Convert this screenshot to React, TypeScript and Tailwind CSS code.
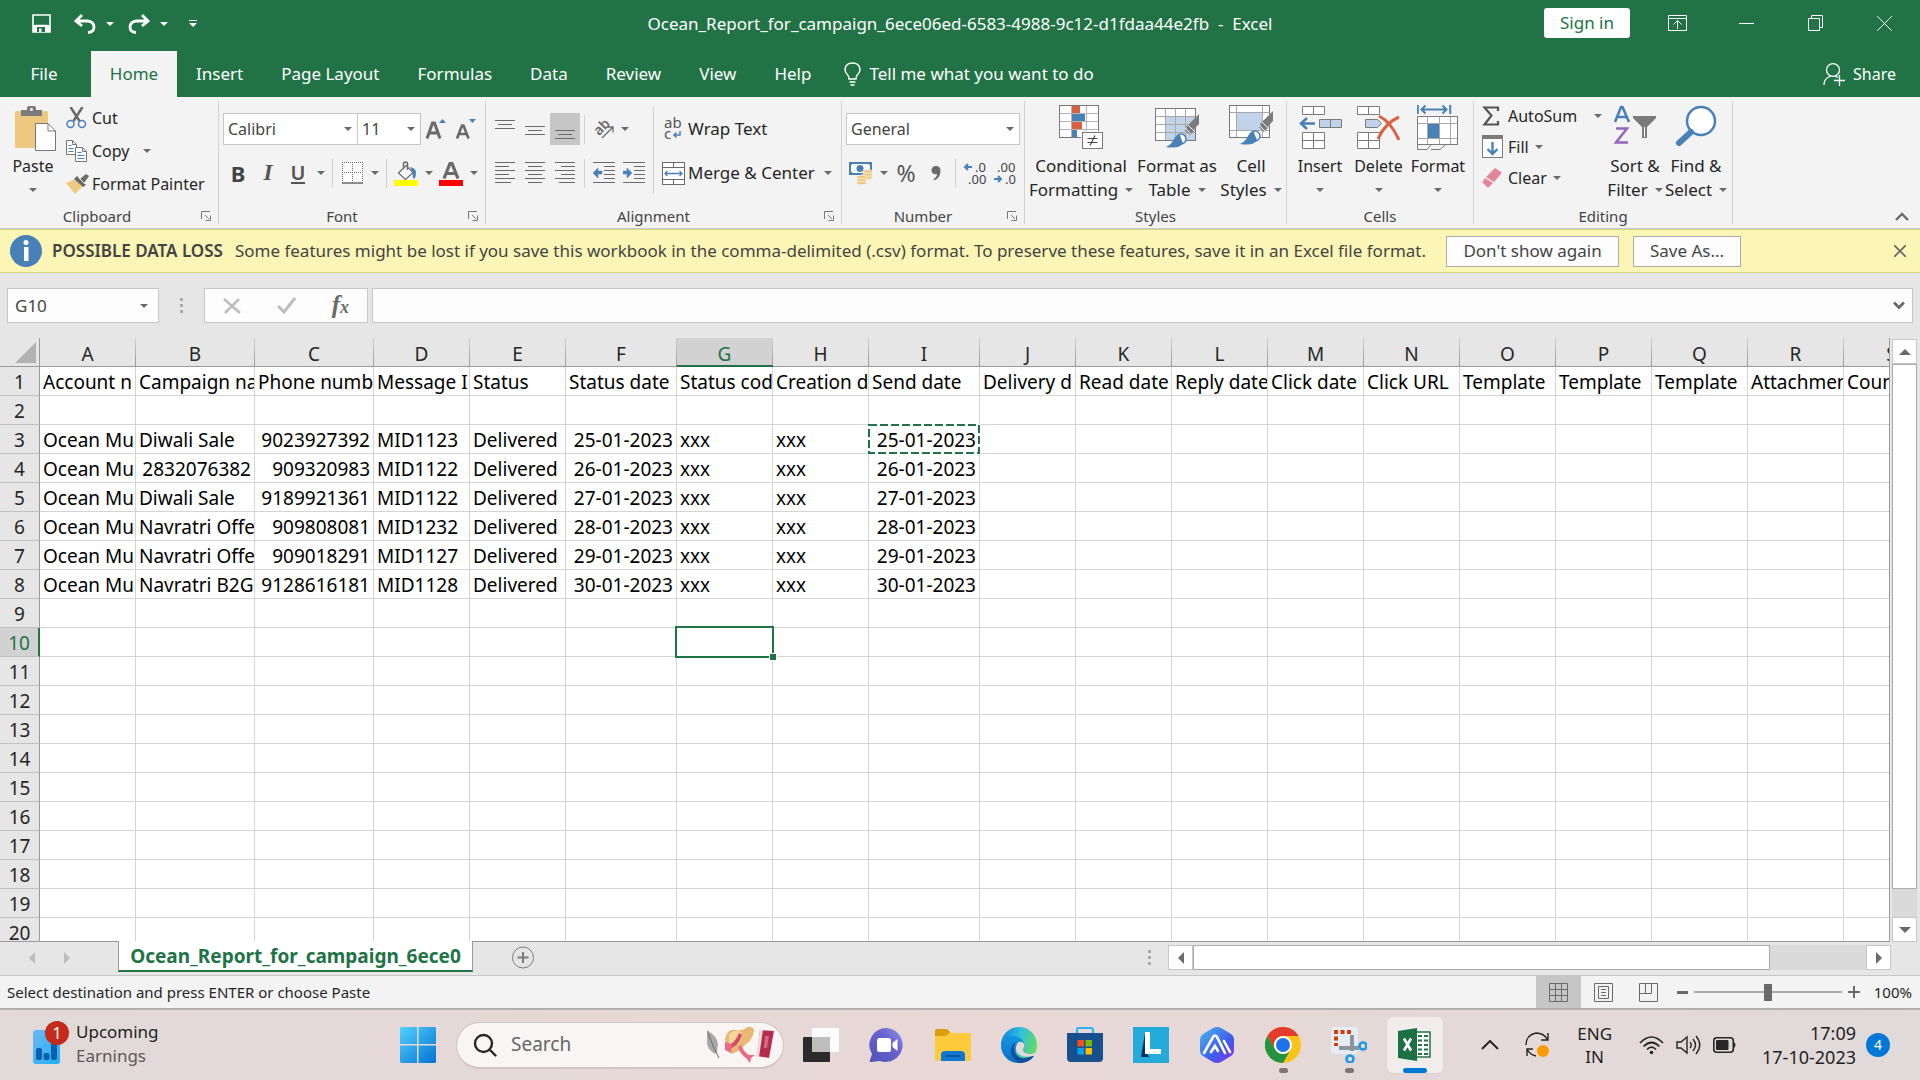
import type { ReactNode } from 'react';
import { useState } from 'react';

type Cell = string | undefined;

interface Column {
  letter: string;
  width: number;
}

const columns: Column[] = [
  { letter: 'A', width: 96 },
  { letter: 'B', width: 119 },
  { letter: 'C', width: 119 },
  { letter: 'D', width: 96 },
  { letter: 'E', width: 96 },
  { letter: 'F', width: 111 },
  { letter: 'G', width: 96 },
  { letter: 'H', width: 96 },
  { letter: 'I', width: 111 },
  { letter: 'J', width: 96 },
  { letter: 'K', width: 96 },
  { letter: 'L', width: 96 },
  { letter: 'M', width: 96 },
  { letter: 'N', width: 96 },
  { letter: 'O', width: 96 },
  { letter: 'P', width: 96 },
  { letter: 'Q', width: 96 },
  { letter: 'R', width: 96 },
  { letter: 'S', width: 96 },
];

const rows: Record<number, Cell[]> = {
  1: [
    'Account n', 'Campaign na', 'Phone numb', 'Message I', 'Status', 'Status date', 'Status cod',
    'Creation d', 'Send date', 'Delivery d', 'Read date', 'Reply date', 'Click date', 'Click URL',
    'Template', 'Template', 'Template', 'Attachmen', 'Coun',
  ],
  3: ['Ocean Mu', 'Diwali Sale', '9023927392', 'MID1123', 'Delivered', '25-01-2023', 'xxx', 'xxx', '25-01-2023'],
  4: ['Ocean Mu', '2832076382', '909320983', 'MID1122', 'Delivered', '26-01-2023', 'xxx', 'xxx', '26-01-2023'],
  5: ['Ocean Mu', 'Diwali Sale', '9189921361', 'MID1122', 'Delivered', '27-01-2023', 'xxx', 'xxx', '27-01-2023'],
  6: ['Ocean Mu', 'Navratri Offe', '909808081', 'MID1232', 'Delivered', '28-01-2023', 'xxx', 'xxx', '28-01-2023'],
  7: ['Ocean Mu', 'Navratri Offe', '909018291', 'MID1127', 'Delivered', '29-01-2023', 'xxx', 'xxx', '29-01-2023'],
  8: ['Ocean Mu', 'Navratri B2G', '9128616181', 'MID1128', 'Delivered', '30-01-2023', 'xxx', 'xxx', '30-01-2023'],
};

const tabs = ['Insert', 'Page Layout', 'Formulas', 'Data', 'Review', 'View', 'Help'];

const isNumeric = (value: Cell) => !!value && /^[\d-]+$/.test(value);

/* ---------- small shared pieces ---------- */

function Caret({ className = 'fill-[#6a6a6a]' }: { className?: string }) {
  return (
    <svg width="8" height="4" viewBox="0 0 8 4" className={`shrink-0 ${className}`} aria-hidden="true">
      <path d="M0 0h8L4 4z" />
    </svg>
  );
}

function CaretButton({ label, className = 'w-[15px]' }: { label: string; className?: string }) {
  return (
    <button type="button" aria-label={label} className={`flex h-8 items-center justify-center ${className}`}>
      <Caret />
    </button>
  );
}

function ToolButton({ label, selected, children }: { label: string; selected?: boolean; children: ReactNode }) {
  return (
    <button
      type="button"
      aria-label={label}
      className={`flex h-8 w-[30px] items-center justify-center ${selected ? 'bg-[#c6c6c6]' : ''}`}
    >
      {children}
    </button>
  );
}

function Divider() {
  return <span className="mx-1 h-[29px] w-px bg-[#d2d2d2]" />;
}

function Launcher({ label }: { label: string }) {
  return (
    <button type="button" aria-label={label} className="flex w-6 justify-end pr-[7px]">
      <svg width="10" height="10" viewBox="0 0 10 10" fill="none" stroke="#777" aria-hidden="true">
        <path d="M.5 8V.5H9M4 4l4 4M9.5 4.500v5h-5" />
      </svg>
    </button>
  );
}

function Group({ label, launcher, className, children }: {
  label: string;
  launcher?: boolean;
  className: string;
  children: ReactNode;
}) {
  return (
    <section aria-label={label} className={`my-1 flex shrink-0 flex-col border-r border-[#d2d2d2] ${className}`}>
      <div className="flex flex-1">{children}</div>
      <div className="flex h-4 items-center">
        <span className="flex-1 text-center text-[15px] leading-4 text-[#444]">{label}</span>
        {launcher && <Launcher label={`${label} settings`} />}
      </div>
    </section>
  );
}

function BigButton({ lines, className, children }: {
  lines: string[];
  className: string;
  children: ReactNode;
}) {
  const single = lines.length === 1;
  return (
    <button
      type="button"
      className={`flex flex-col items-center pt-1 leading-6 whitespace-nowrap ${single ? 'text-base' : 'text-[17px]'} ${className}`}
    >
      <span className="flex h-[49px] items-start justify-center">{children}</span>
      {lines.map((line, i) => (
        <span key={line} className="flex h-6 items-center gap-[7px] leading-6">
          {line}
          {i === 1 && <Caret />}
        </span>
      ))}
      {single && <span className="flex h-6 items-center"><Caret /></span>}
    </button>
  );
}

/* ---------- ribbon icons ---------- */

function PasteIcon() {
  return (
    <svg width="42" height="46" viewBox="0 0 42 46" aria-hidden="true">
      <rect x="0" y="5" width="33" height="37" rx="1.5" fill="#edc87e" />
      <path d="M6 4h6V2q0-2 2-2h5q2 0 2 2v2h6v6H6z" fill="#7b7b7b" />
      <circle cx="16.5" cy="3.5" r="1.5" fill="#fff" />
      <path d="M20 17h14l8 8v21H20z" fill="#f3f3f3" />
      <path d="M20.500 17.500H33l7.500 7.500v19.500h-20z" fill="#fff" stroke="#777" />
      <path d="M33 17.500V25h7.500" fill="none" stroke="#777" />
    </svg>
  );
}

function CutIcon() {
  return (
    <svg width="21" height="22" viewBox="0 0 21 22" fill="none" aria-hidden="true">
      <path d="M4.500 0l9 14M16.500 0l-9 14" stroke="#6a6a6a" strokeWidth="2.5" />
      <circle cx="4.5" cy="17" r="3.5" stroke="#4880b8" strokeWidth="1.5" />
      <circle cx="16" cy="17" r="3.5" stroke="#4880b8" strokeWidth="1.5" />
    </svg>
  );
}

function CopyIcon() {
  return (
    <svg width="21" height="22" viewBox="0 0 21 22" fill="#fff" stroke="#777" aria-hidden="true">
      <path d="M.5.500h6l4 4v10H.500z" />
      <path d="M6.500.500v4h4" fill="none" />
      <path d="M2.500 5.500h3M2.500 8.500h5M2.500 11.500h5" stroke="#4880b8" />
      <path d="M9.500 7.500h7l4 4v10h-11z" />
      <path d="M16.500 7.500v4h4" fill="none" />
      <path d="M11.500 12.500h4M11.500 15.500h7M11.500 18.500h7" stroke="#4880b8" />
    </svg>
  );
}

function PainterIcon() {
  return (
    <svg width="23" height="20" viewBox="0 0 23 20" aria-hidden="true">
      <path d="M0 9l9-4 7 8-7 7z" fill="#edc87e" />
      <path d="M8 5l3-3 9 9-3 2z" fill="#6a6a6a" />
      <path d="M14 5l6-5 3 2-5 7z" fill="#6a6a6a" />
      <path d="M13 4l6 6" stroke="#f3f3f3" />
    </svg>
  );
}

function BordersIcon() {
  return (
    <svg width="21" height="22" viewBox="0 0 21 22" stroke="#6a6a6a" aria-hidden="true">
      <rect width="21" height="21" fill="#fff" stroke="none" />
      <path d="M0 .5h21M.5 0v21M20.500 0v21M10.500 0v21M0 10.500h21" strokeDasharray="1 1" />
      <path d="M0 21h21" strokeWidth="1.5" />
    </svg>
  );
}

function FillColorIcon() {
  return (
    <svg width="24" height="25" viewBox="0 0 24 25" aria-hidden="true">
      <path d="M4.500 12L12 4.500l7 7-7.500 7z" fill="#fff" stroke="#6a6a6a" strokeWidth="1.2" />
      <path d="M9.500 8V3q0-2 2-2t2 2v6" fill="none" stroke="#6a6a6a" strokeWidth="1.5" />
      <path d="M16 6q6 1 6 6 0 4-2 6-2-2-1-6z" fill="#4880b8" />
      <rect y="19" width="24" height="6" fill="#ff0" />
    </svg>
  );
}

function FontColorIcon() {
  return (
    <svg width="24" height="25" viewBox="0 0 24 25" aria-hidden="true">
      <path d="M5 17.500L11 2.500h2L19 17.500M7.500 12.500h9" fill="none" stroke="#6a6a6a" strokeWidth="3.2" />
      <rect y="19" width="24" height="6" fill="#f00" />
    </svg>
  );
}

function SizeIcon({ grow }: { grow?: boolean }) {
  return (
    <svg width="22" height="24" viewBox="0 0 22 24" fill="none" aria-hidden="true">
      {grow ? (
        <>
          <path d="M2 21.500L7.500 6h2L15 21.500M4.500 16h8" stroke="#6a6a6a" strokeWidth="3" />
          <path d="M14 6h7l-3.500-4z" fill="#4880b8" />
        </>
      ) : (
        <>
          <path d="M2 21.500L7 8.500h1.500l5 13M4 17h7.500" stroke="#6a6a6a" strokeWidth="2.6" />
          <path d="M14 2h7l-3.500 4z" fill="#4880b8" />
        </>
      )}
    </svg>
  );
}

function LinesIcon({ d }: { d: string }) {
  return (
    <svg width="22" height="22" viewBox="0 0 22 22" stroke="#6a6a6a" fill="none" aria-hidden="true">
      <path d={d} />
    </svg>
  );
}

function IndentIcon({ increase }: { increase?: boolean }) {
  return (
    <svg width="22" height="22" viewBox="0 0 22 22" stroke="#6a6a6a" fill="none" aria-hidden="true">
      <path d="M0 .5h22M11 4.500h11M11 8.500h11M11 12.500h11M11 16.500h11M0 20.500h22" />
      {increase ? (
        <path d="M0 9h4V6l5 5-5 5v-4H0z" fill="#4880b8" stroke="#4880b8" strokeWidth=".5" />
      ) : (
        <path d="M9 9H5V6l-5 5 5 5v-4h4z" fill="#4880b8" stroke="#4880b8" strokeWidth=".5" />
      )}
    </svg>
  );
}

function OrientationIcon() {
  return (
    <svg width="22" height="22" viewBox="0 0 22 22" aria-hidden="true">
      <text x="2" y="15" transform="rotate(-45 8 12)" fontSize="14" fontWeight="600" fill="#6a6a6a">ab</text>
      <path d="M9 20L20 9M14.500 9H20v5.500" fill="none" stroke="#6a6a6a" strokeWidth="1.3" />
    </svg>
  );
}

function WrapIcon() {
  return (
    <svg width="18" height="24" viewBox="0 0 18 24" aria-hidden="true">
      <text x="0" y="11" fontSize="15" fill="#555">ab</text>
      <text x="0" y="22" fontSize="15" fill="#555">c</text>
      <path d="M16 14v4h-6M12.500 15.500L10 18l2.500 2.500" fill="none" stroke="#4880b8" strokeWidth="1.5" />
    </svg>
  );
}

function MergeIcon() {
  return (
    <svg width="23" height="23" viewBox="0 0 23 23" fill="#fff" stroke="#6a6a6a" aria-hidden="true">
      <rect x=".5" y=".5" width="22" height="22" />
      <path d="M0 5.500h23M0 17.500h23M11.500 0v5.500M11.500 17.500V23" />
      <path d="M3 11.500h17M5.500 9L3 11.500 5.500 14M17.500 9l2.500 2.500-2.500 2.500" fill="none" stroke="#4880b8" strokeWidth="1.3" />
    </svg>
  );
}

function MoneyIcon() {
  return (
    <svg width="24" height="24" viewBox="0 0 24 24" aria-hidden="true">
      <rect width="23" height="13" y="1" fill="#4880b8" />
      <rect x="2" y="3" width="19" height="9" fill="#fff" />
      <circle cx="11" cy="7.5" r="3.5" fill="#4880b8" />
      <path d="M0 1h3v3H0zM20 1h3v3h-3zM0 11h3v3H0z" fill="#4880b8" />
      <g fill="#edc87e" stroke="#f3f3f3" strokeWidth=".7">
        <ellipse cx="18.5" cy="16.5" rx="5" ry="1.8" />
        <ellipse cx="18.5" cy="13.5" rx="5" ry="1.8" />
        <ellipse cx="18.5" cy="10.5" rx="5" ry="1.8" />
        <ellipse cx="12.5" cy="22" rx="5" ry="1.8" />
        <ellipse cx="12.5" cy="19" rx="5" ry="1.8" />
        <ellipse cx="12.5" cy="16" rx="5" ry="1.8" />
      </g>
    </svg>
  );
}

function DecimalIcon({ increase }: { increase?: boolean }) {
  return (
    <svg width="24" height="24" viewBox="0 0 24 24" fontSize="13" fill="#444" aria-hidden="true">
      {increase ? (
        <>
          <text x="12" y="11">.0</text>
          <text x="5" y="23">.00</text>
          <path d="M9 6H2M5 3L2 6l3 3" fill="none" stroke="#4880b8" strokeWidth="2" />
        </>
      ) : (
        <>
          <text x="4" y="11">.00</text>
          <text x="12" y="23">.0</text>
          <path d="M1 18h7M5 15l3 3-3 3" fill="none" stroke="#4880b8" strokeWidth="2" />
        </>
      )}
    </svg>
  );
}

function ConditionalIcon() {
  return (
    <svg width="44" height="45" viewBox="0 0 44 45" aria-hidden="true">
      <rect x=".5" y=".5" width="39" height="32" fill="#fff" />
      <path d="M0 8.500h40M0 16.500h40M0 24.500h40M12.500 0v33M27.500 0v33" stroke="#b5b5b5" />
      <rect x=".5" y=".5" width="39" height="32" fill="none" stroke="#777" />
      <path d="M13 1h8v7h-8zM13 17h10v7H13z" fill="#d9613f" />
      <path d="M13 9h13v7H13zM13 25h5v7h-5z" fill="#4880b8" />
      <rect x="22" y="26" width="22" height="19" fill="#f3f3f3" />
      <rect x="23.5" y="27.5" width="20" height="16" fill="#fff" stroke="#777" />
      <path d="M28.500 33.500h10M28.500 37.500h10M36 30.500l-5 10" stroke="#444" strokeWidth="1.2" />
    </svg>
  );
}

function Brush() {
  return (
    <>
      <path d="M44 9v10l-8 8-5-5z" fill="#7b7b7b" />
      <path d="M35 20l5 5-5 5-5-5z" fill="#7b7b7b" />
      <path d="M33 20l6 6M30 23l6 6" stroke="#f3f3f3" />
      <circle cx="26" cy="34" r="5" fill="#fff" stroke="#4880b8" strokeWidth="1.5" />
      <path d="M11 42q6-3 8-8 2-4 6-4 1 4 3 8-3 6-17 4z" fill="#4880b8" />
    </>
  );
}

function FormatTableIcon() {
  return (
    <svg width="45" height="46" viewBox="0 0 45 46" aria-hidden="true">
      <rect x=".5" y="3.5" width="40" height="32" fill="#fff" />
      <path d="M10 12h31v24H10z" fill="#c0d3e8" />
      <path d="M0 11.500h41M0 19.500h41M0 27.500h41M10.500 3v33M20.500 3v33M30.500 3v33" stroke="#a8a8a8" />
      <rect x=".5" y="3.5" width="40" height="32" fill="none" stroke="#777" />
      <Brush />
    </svg>
  );
}

function CellStylesIcon() {
  return (
    <svg width="45" height="46" viewBox="0 0 45 46" aria-hidden="true">
      <rect x=".5" y=".5" width="40" height="32" fill="#fff" />
      <path d="M8 8h26v18H8z" fill="#c0d3e8" />
      <path d="M0 7.500h41M0 25.500h41M7.500 0v33M33.500 0v33" stroke="#a8a8a8" />
      <rect x=".5" y=".5" width="40" height="32" fill="none" stroke="#777" />
      <g transform="translate(0 -3)"><Brush /></g>
    </svg>
  );
}

function InsertCellsIcon() {
  return (
    <svg width="43" height="45" viewBox="0 0 43 45" fill="#fff" stroke="#7b7b7b" aria-hidden="true">
      <path d="M3.500 1.500h22v8h-22zM14.500 1.500v8" />
      <path d="M3.500 27.500h22v16h-22zM14.500 27.500v16M3.500 35.500h22" />
      <path d="M20.500 14.500h22v8h-22zM31.500 14.500v8" fill="#c0d3e8" />
      <path d="M16 18.500H2M8 13l-6 5.500L8 24" fill="none" stroke="#4880b8" strokeWidth="2.5" />
    </svg>
  );
}

function DeleteCellsIcon() {
  return (
    <svg width="43" height="45" viewBox="0 0 43 45" fill="#fff" stroke="#7b7b7b" aria-hidden="true">
      <path d="M.5 1.500h22v8H.500zM11.500 1.500v8" />
      <path d="M.5 27.500h22v16H.500zM11.500 27.500v16M.5 35.500h22" />
      <path d="M8.500 14.500h12l4 4-4 4h-12z" fill="#c0d3e8" />
      <path d="M22 11q12 6 20 24M42 12Q28 18 21 34" fill="none" stroke="#d9613f" strokeWidth="3" />
    </svg>
  );
}

function FormatCellsIcon() {
  return (
    <svg width="42" height="46" viewBox="0 0 42 46" fill="#fff" stroke="#7b7b7b" aria-hidden="true">
      <path d="M.5 11.500h40v28H.500z" />
      <path d="M0 18.500h41M0 33.500h41M10.500 11v29M22.500 11v29M33.500 11v29" stroke="#a8a8a8" />
      <path d="M.5 11.500h40v28H.500z" fill="none" />
      <path d="M.5 40v4.500H10l4-4.500M14 44.500h9l5-4.500" fill="none" />
      <path d="M11 19h11v14H11z" fill="#4880b8" stroke="none" />
      <path d="M.8 0v9M33.200 0v9M4 4.500h26M8.500.500l-4 4 4 4M25.500.500l4 4-4 4" fill="none" stroke="#4880b8" strokeWidth="2" />
    </svg>
  );
}

function SortIcon() {
  return (
    <svg width="42" height="42" viewBox="0 0 42 42" aria-hidden="true">
      <path d="M1 17L7 2h1.500L15 17M3.500 12h9" fill="none" stroke="#4880b8" strokeWidth="2.6" />
      <path d="M2 23.500h11L2 37.500h12" fill="none" stroke="#9467bd" strokeWidth="2.5" />
      <path d="M19 11h23v2l-9 9v11h-5V22l-9-9z" fill="#7b7b7b" />
      <path d="M30.500 22v10" stroke="#fff" />
    </svg>
  );
}

function FindIcon() {
  return (
    <svg width="42" height="42" viewBox="0 0 42 42" aria-hidden="true">
      <circle cx="26" cy="16" r="14" fill="#fff" stroke="#4880b8" strokeWidth="2.5" />
      <path d="M16 27L4 38" stroke="#4880b8" strokeWidth="6" strokeLinecap="round" />
    </svg>
  );
}

function SigmaIcon() {
  return (
    <svg width="18" height="20" viewBox="0 0 18 20" fill="none" aria-hidden="true">
      <path d="M16 5V1.500H2.500l7 8-7 9H16V15" stroke="#555" strokeWidth="2.2" />
    </svg>
  );
}

function FillIcon() {
  return (
    <svg width="21" height="23" viewBox="0 0 21 23" aria-hidden="true">
      <rect x=".5" y=".5" width="20" height="22" fill="#fff" stroke="#7b7b7b" />
      <rect width="21" height="4" fill="#7b7b7b" />
      <path d="M10.500 7v12M5.500 14l5 5 5-5" fill="none" stroke="#4880b8" strokeWidth="2.4" />
    </svg>
  );
}

function EraserIcon() {
  return (
    <svg width="21" height="21" viewBox="0 0 21 21" aria-hidden="true">
      <path d="M13 1l6 4q1 1 0 2l-7 8-8-5z" fill="#e68599" />
      <path d="M3 11l8 5-4 4q-1 1-2 0l-4-4q-1-1 0-2z" fill="#e68599" />
    </svg>
  );
}

/* ---------- title bar and ribbon ---------- */

function TitleBar() {
  return (
    <header className="flex h-[51px] items-start justify-between text-white">
      <div className="flex h-[47px] flex-1 items-center">
        <button type="button" aria-label="Save" className="ml-8">
          <svg width="19" height="19" viewBox="0 0 19 19" aria-hidden="true">
            <path d="M1 1h17v17H1zM3.500 11.500h12" fill="none" stroke="#fff" strokeWidth="1.6" />
            <path d="M1 11h17v7H1z" fill="#fff" />
            <path d="M5 13h8v5H5z" fill="#217346" />
            <path d="M7 14.500h2.500V18H7z" fill="#fff" />
          </svg>
        </button>
        <button type="button" aria-label="Undo" className="ml-[23px]">
          <svg width="22" height="20" viewBox="0 0 22 20" fill="none" stroke="#fff" strokeWidth="2.8" aria-hidden="true">
            <path d="M8 1L2 7l6 5M2.500 7H14q6 1 6 6 0 5-6 5.500" />
          </svg>
        </button>
        <button type="button" aria-label="Undo history" className="ml-[10px]"><Caret className="fill-white" /></button>
        <button type="button" aria-label="Redo" className="ml-[14px]">
          <svg width="22" height="20" viewBox="0 0 22 20" fill="none" stroke="#fff" strokeWidth="2.8" aria-hidden="true">
            <path d="M14 1l6 6-6 5M19.500 7H8q-6 1-6 6 0 5 6 5.500" />
          </svg>
        </button>
        <button type="button" aria-label="Redo history" className="ml-[10px]"><Caret className="fill-white" /></button>
        <button type="button" aria-label="Customize toolbar" className="ml-[21px] flex flex-col gap-[2px]">
          <span className="h-px w-2 bg-white" />
          <Caret className="fill-white" />
        </button>
      </div>
      <h1 className="h-[47px] text-[17px] leading-[47px] whitespace-pre">
        Ocean_Report_for_campaign_6ece06ed-6583-4988-9c12-d1fdaa44e2fb  -  Excel
      </h1>
      <div className="flex h-[46px] flex-1 items-center justify-end">
        <button type="button" className="mr-[13px] h-[30px] w-[86px] rounded-[3px] bg-white text-[17px] text-[#217346]">
          Sign in
        </button>
        <button type="button" aria-label="Ribbon display options" className="flex w-[69px] justify-center">
          <svg width="19" height="16" viewBox="0 0 19 16" fill="none" stroke="#fff" aria-hidden="true">
            <path d="M.5.500h18v15H.500zM.5 3.500h18M9.500 14V6M5.500 9.500l4-4 4 4" />
          </svg>
        </button>
        <button type="button" aria-label="Minimize" className="flex w-[69px] justify-center">
          <span className="h-px w-[15px] bg-white" />
        </button>
        <button type="button" aria-label="Restore" className="flex w-[69px] justify-center">
          <svg width="15" height="16" viewBox="0 0 15 16" fill="none" stroke="#fff" aria-hidden="true">
            <path d="M.5 3.500h11v12H.500zM3.500 3V.500h11v12H12" />
          </svg>
        </button>
        <button type="button" aria-label="Close" className="mr-px flex w-[69px] justify-center">
          <svg width="15" height="15" viewBox="0 0 15 15" fill="none" stroke="#fff" aria-hidden="true">
            <path d="M0 0l15 15M15 0L0 15" />
          </svg>
        </button>
      </div>
    </header>
  );
}

function TabStrip() {
  return (
    <nav className="flex h-[46px] items-stretch text-[17px] text-white">
      <button type="button" className="w-[91px] pr-[3px]">File</button>
      <button type="button" aria-current="page" className="w-[86px] bg-[#f3f3f3] text-[#217346]">Home</button>
      {tabs.map(tab => (
        <button key={tab} type="button" className="px-[19px]">{tab}</button>
      ))}
      <button type="button" className="flex items-center gap-2 pl-[14px]">
        <svg width="17" height="24" viewBox="0 0 17 24" fill="none" stroke="#fff" strokeWidth="1.5" aria-hidden="true">
          <path d="M5 17q0-3-2-5-2-1.500-2-5 1-6 7.500-6T16 7q0 3.500-2 5-2 2-2 5zM5.500 20h6M6.500 23h4" />
        </svg>
        Tell me what you want to do
      </button>
      <button type="button" className="mr-6 ml-auto flex items-center gap-2 text-base">
        <svg width="22" height="23" viewBox="0 0 22 23" fill="none" stroke="#fff" strokeWidth="1.3" aria-hidden="true">
          <ellipse cx="10" cy="7" rx="6.5" ry="6.3" />
          <path d="M1 22q0-7 7-9M12 13l3 1.500M11 17.500h11M16.500 12v11" />
        </svg>
        Share
      </button>
    </nav>
  );
}

function Combo({ label, value, options, className }: {
  label: string;
  value: string;
  options: string[];
  className: string;
}) {
  const [current, setCurrent] = useState(value);
  return (
    <label className={`relative flex h-8 items-center border border-[#c6c6c6] bg-white ${className}`}>
      <span className="sr-only">{label}</span>
      <select
        value={current}
        onChange={e => setCurrent(e.target.value)}
        className="h-full w-full appearance-none bg-transparent pl-1 text-base text-[#444] outline-none"
      >
        {options.map(option => <option key={option}>{option}</option>)}
      </select>
      <span className="pointer-events-none absolute right-[5px]"><Caret /></span>
    </label>
  );
}

function Ribbon() {
  return (
    <div className="flex h-[132px] border-b border-[#cacaca] bg-[#f3f3f3] text-[#262626]">
      <Group label="Clipboard" launcher className="w-[219px]">
        <BigButton lines={['Paste']} className="w-[66px]">
          <span className="pt-px pl-[6px]"><PasteIcon /></span>
        </BigButton>
        <div className="flex flex-col text-base">
          <button type="button" className="flex h-[33px] items-center">
            <span className="w-[26px]"><CutIcon /></span>Cut
          </button>
          <button type="button" className="flex h-[33px] items-center">
            <span className="w-[26px]"><CopyIcon /></span>Copy
            <span className="pl-[14px]"><Caret /></span>
          </button>
          <button type="button" className="flex h-[33px] items-center whitespace-nowrap">
            <span className="w-[26px]"><PainterIcon /></span>Format Painter
          </button>
        </div>
      </Group>

      <Group label="Font" launcher className="w-[267px] pl-1">
        <div className="flex flex-col gap-3 pt-3">
          <div className="flex items-center">
            <Combo label="Font" value="Calibri" options={['Calibri', 'Arial', 'Cambria']} className="w-[135px]" />
            <Combo label="Font size" value="11" options={['10', '11', '12', '14']} className="w-[63px] border-l-0" />
            <ToolButton label="Increase font size"><SizeIcon grow /></ToolButton>
            <ToolButton label="Decrease font size"><SizeIcon /></ToolButton>
          </div>
          <div className="flex items-center">
            <ToolButton label="Bold"><span className="text-[22px] font-bold text-[#444]">B</span></ToolButton>
            <ToolButton label="Italic">
              <span className="font-['Liberation_Serif',serif] text-[23px] font-bold text-[#555] italic">I</span>
            </ToolButton>
            <ToolButton label="Underline">
              <span className="border-b-2 border-[#555] text-[20px] leading-[19px] font-semibold text-[#555]">U</span>
            </ToolButton>
            <CaretButton label="Underline styles" />
            <Divider />
            <ToolButton label="Borders"><BordersIcon /></ToolButton>
            <CaretButton label="Border styles" />
            <Divider />
            <ToolButton label="Fill color"><FillColorIcon /></ToolButton>
            <CaretButton label="Fill colors" />
            <ToolButton label="Font color"><FontColorIcon /></ToolButton>
            <CaretButton label="Font colors" />
          </div>
        </div>
      </Group>

      <Group label="Alignment" launcher className="w-[356px] pl-1">
        <div className="flex flex-col gap-3 pt-3">
          <div className="flex items-center">
            <ToolButton label="Top align"><LinesIcon d="M1 2.500h20M4 6.500h14M1 10.500h20" /></ToolButton>
            <ToolButton label="Middle align"><LinesIcon d="M1 8.500h20M4 12.500h14M1 16.500h20" /></ToolButton>
            <ToolButton label="Bottom align" selected><LinesIcon d="M1 12.500h20M4 16.500h14M1 20.500h20" /></ToolButton>
            <Divider />
            <ToolButton label="Orientation"><OrientationIcon /></ToolButton>
            <CaretButton label="Orientation options" className="w-3" />
          </div>
          <div className="flex items-center">
            <ToolButton label="Align left">
              <LinesIcon d="M1 .5h20M1 4.500h14M1 8.500h20M1 12.500h14M1 16.500h20M1 20.500h16" />
            </ToolButton>
            <ToolButton label="Center">
              <LinesIcon d="M1 .5h20M4 4.500h14M1 8.500h20M4 12.500h14M1 16.500h20M4 20.500h14" />
            </ToolButton>
            <ToolButton label="Align right">
              <LinesIcon d="M1 .5h20M7 4.500h14M1 8.500h20M7 12.500h14M1 16.500h20M5 20.500h16" />
            </ToolButton>
            <Divider />
            <ToolButton label="Decrease indent"><IndentIcon /></ToolButton>
            <ToolButton label="Increase indent"><IndentIcon increase /></ToolButton>
          </div>
        </div>
        <span className="mx-1 mt-[6px] h-[87px] w-px bg-[#d2d2d2]" />
        <div className="flex flex-1 flex-col gap-3 pt-3 text-[17px]">
          <button type="button" className="flex h-8 items-center whitespace-nowrap">
            <span className="flex w-[30px] justify-center"><WrapIcon /></span>Wrap Text
          </button>
          <button type="button" className="flex h-8 items-center whitespace-nowrap">
            <span className="flex w-[30px] justify-center"><MergeIcon /></span>Merge &amp; Center
            <span className="mr-[9px] ml-auto"><Caret /></span>
          </button>
        </div>
      </Group>

      <Group label="Number" launcher className="w-[183px] pl-1">
        <div className="flex flex-col gap-3 pt-3">
          <Combo label="Number format" value="General" options={['General', 'Number', 'Currency']} className="w-[174px]" />
          <div className="flex items-center">
            <ToolButton label="Accounting format"><MoneyIcon /></ToolButton>
            <CaretButton label="Accounting options" />
            <ToolButton label="Percent style"><span className="text-[23px] text-[#555]">%</span></ToolButton>
            <ToolButton label="Comma style">
              <svg width="10" height="15" viewBox="0 0 10 15" fill="#6a6a6a" aria-hidden="true">
                <path d="M5 0q4.500 0 4.500 5 0 7-6.500 9.500L2.500 13Q6 11 6 8 1 9 .5 4.500.500 0 5 0z" />
              </svg>
            </ToolButton>
            <Divider />
            <ToolButton label="Increase decimal"><DecimalIcon increase /></ToolButton>
            <ToolButton label="Decrease decimal"><DecimalIcon /></ToolButton>
          </div>
        </div>
      </Group>

      <Group label="Styles" className="w-[262px]">
        <BigButton lines={['Conditional', 'Formatting']} className="w-[112px]"><ConditionalIcon /></BigButton>
        <BigButton lines={['Format as', 'Table']} className="w-[80px]"><FormatTableIcon /></BigButton>
        <BigButton lines={['Cell', 'Styles']} className="w-[68px]"><CellStylesIcon /></BigButton>
      </Group>

      <Group label="Cells" className="w-[187px]">
        <div className="flex pl-1">
          <BigButton lines={['Insert']} className="w-[58px]"><InsertCellsIcon /></BigButton>
          <BigButton lines={['Delete']} className="w-[59px]"><DeleteCellsIcon /></BigButton>
          <BigButton lines={['Format']} className="w-[60px]"><FormatCellsIcon /></BigButton>
        </div>
      </Group>

      <Group label="Editing" className="w-[259px]">
        <div className="flex w-[132px] flex-col pl-2 text-base">
          <button type="button" className="flex h-[30px] items-center">
            <span className="w-[26px]"><SigmaIcon /></span>AutoSum
            <span className="mr-1 ml-auto"><Caret /></span>
          </button>
          <button type="button" className="flex h-[31px] items-center">
            <span className="w-[26px]"><FillIcon /></span>Fill
            <span className="pl-[6px]"><Caret /></span>
          </button>
          <button type="button" className="flex h-[31px] items-center">
            <span className="w-[26px]"><EraserIcon /></span>Clear
            <span className="pl-[6px]"><Caret /></span>
          </button>
        </div>
        <BigButton lines={['Sort &', 'Filter']} className="w-[58px]"><SortIcon /></BigButton>
        <BigButton lines={['Find &', 'Select']} className="w-[64px]"><FindIcon /></BigButton>
      </Group>

      <button type="button" aria-label="Collapse the ribbon" className="mr-[11px] mb-1 ml-auto self-end">
        <svg width="14" height="14" viewBox="0 0 14 14" fill="none" stroke="#6a6a6a" strokeWidth="2.4" aria-hidden="true">
          <path d="M1 10l6-6 6 6" />
        </svg>
      </button>
    </div>
  );
}

function MessageBar() {
  return (
    <div role="alert" className="flex h-11 items-center border-y border-[#d6d385] bg-[#fcf6b6] pr-3 pl-[10px] text-[17px] whitespace-nowrap text-[#444]">
      <svg width="32" height="32" viewBox="0 0 32 32" className="shrink-0" aria-hidden="true">
        <circle cx="16" cy="16" r="16" fill="#4880b8" />
        <circle cx="16" cy="7.5" r="2.5" fill="#fff" />
        <path d="M14 12h4.500v14H14z" fill="#fff" />
      </svg>
      <strong className="ml-[10px] font-semibold">POSSIBLE DATA LOSS</strong>
      <span className="ml-3">
        Some features might be lost if you save this workbook in the comma-delimited (.csv) format. To preserve these features, save it in an Excel file format.
      </span>
      <button type="button" className="ml-5 h-[31px] w-[173px] border border-[#ababab] bg-[#fdfdfd]">Don&apos;t show again</button>
      <button type="button" className="ml-[14px] h-[31px] w-[108px] border border-[#ababab] bg-[#fdfdfd]">Save As...</button>
      <button type="button" aria-label="Close message" className="ml-auto p-[2px]">
        <svg width="12" height="12" viewBox="0 0 12 12" stroke="#6a6a6a" strokeWidth="1.8" aria-hidden="true">
          <path d="M0 0l12 12M12 0L0 12" />
        </svg>
      </button>
    </div>
  );
}

function Dots() {
  return (
    <span className="flex flex-col gap-[3px]">
      <span className="size-[3px] bg-[#aaa]" />
      <span className="size-[3px] bg-[#aaa]" />
      <span className="size-[3px] bg-[#aaa]" />
    </span>
  );
}

function FormulaBar() {
  return (
    <div className="flex h-[65px] items-center px-[7px]">
      <div className="flex h-[35px] w-[152px] items-center border border-[#c6c6c6] bg-[#fdfdfd] pr-[10px]">
        <input aria-label="Name box" defaultValue="G10" className="w-full min-w-0 bg-transparent pl-[7px] text-[17px] text-[#444] outline-none" />
        <Caret />
      </div>
      <span className="flex w-[45px] justify-center"><Dots /></span>
      <div className="mr-1 flex h-[35px] w-[164px] items-center justify-around border border-[#c6c6c6] bg-[#fdfdfd]">
        <button type="button" aria-label="Cancel">
          <svg width="18" height="16" viewBox="0 0 18 16" stroke="#bdbdbd" strokeWidth="2.5" aria-hidden="true">
            <path d="M1 1l16 14M16 1L2 15" />
          </svg>
        </button>
        <button type="button" aria-label="Enter">
          <svg width="19" height="17" viewBox="0 0 19 17" fill="none" stroke="#bdbdbd" strokeWidth="3" aria-hidden="true">
            <path d="M1 9l6 6L18 1" />
          </svg>
        </button>
        <button type="button" aria-label="Insert function" className="font-['Liberation_Serif',serif] text-[25px] leading-7 font-bold text-[#6a6a6a] italic">
          f<span className="text-[18px]">x</span>
        </button>
      </div>
      <div className="flex h-[35px] flex-1 items-center border border-[#c6c6c6] bg-[#fdfdfd] pr-[7px]">
        <input aria-label="Formula" className="w-full min-w-0 bg-transparent px-2 text-[17px] outline-none" />
        <svg width="12" height="9" viewBox="0 0 12 9" fill="none" stroke="#6a6a6a" strokeWidth="2.8" aria-hidden="true">
          <path d="M1 1.500l5 5 5-5" />
        </svg>
      </div>
    </div>
  );
}

/* ---------- sheet ---------- */

function Sheet() {
  const rowNumbers = Array.from({ length: 20 }, (_, i) => i + 1);
  const tableWidth = 40 + columns.reduce((sum, c) => sum + c.width, 0);

  return (
    <div className="min-w-0 flex-1 overflow-hidden border-r border-b border-[#9b9b9b]">
      <table className="table-fixed border-separate border-spacing-0 text-[19px] text-black" style={{ width: tableWidth }}>
        <colgroup>
          <col className="w-[40px]" />
          {columns.map(c => <col key={c.letter} style={{ width: c.width }} />)}
        </colgroup>
        <thead>
          <tr className="h-[29px] bg-[#e6e6e6]">
            <td className="border-r border-b border-[#9b9b9b] p-0 pr-[3px]">
              <svg width="21" height="21" viewBox="0 0 21 21" className="ml-auto" aria-hidden="true">
                <path d="M21 0v21H0z" fill="#b2b2b2" />
              </svg>
            </td>
            {columns.map(({ letter }) => (
              <th
                key={letter}
                scope="col"
                className={`p-0 font-normal ${letter === 'G' ? 'border-b-2 border-[#217346] bg-[#d2d2d2] text-[#217346]' : 'border-b border-[#9b9b9b] text-[#262626]'}`}
              >
                <div className={`flex ${letter === 'G' ? 'h-[27px]' : 'h-[28px]'}`}>
                  <span className="flex-1 pt-[2px] leading-[28px]">{letter}</span>
                  <span className="w-px bg-linear-to-b from-[#d0d0d0] to-[#999]" />
                </div>
              </th>
            ))}
          </tr>
        </thead>
        <tbody>
          {rowNumbers.map(n => (
            <tr key={n} className="h-[29px] bg-white">
              <th
                scope="row"
                className={`border-b border-b-[#c0c0c0] p-0 font-normal ${n === 10 ? 'border-r-2 border-r-[#217346] bg-[#d2d2d2] text-[#217346]' : 'border-r border-r-[#9b9b9b] bg-[#e6e6e6] text-[#262626]'}`}
              >
                <div className="h-[28px] leading-[30px]">{n}</div>
              </th>
              {columns.map(({ letter }, i) => {
                const value = rows[n]?.[i];
                return (
                  <td key={letter} className="relative border-r border-b border-[#d4d4d4] p-0">
                    <div className={`h-[28px] overflow-hidden px-[3px] leading-[30px] whitespace-nowrap ${isNumeric(value) ? 'text-right' : ''}`}>
                      {value}
                    </div>
                    {letter === 'I' && n === 3 && (
                      <svg className="absolute -inset-px z-10 h-[30px] w-[112px] overflow-visible" aria-hidden="true">
                        <rect x="1" y="1" width="110" height="28" fill="none" stroke="#fff" strokeWidth="2" />
                        <rect x="1" y="1" width="110" height="28" fill="none" stroke="#217346" strokeWidth="2" strokeDasharray="8 3" />
                      </svg>
                    )}
                    {letter === 'G' && n === 10 && (
                      <div className="absolute -inset-[2px] z-10 border-2 border-[#217346]">
                        <span className="absolute -right-[5px] -bottom-[5px] size-[8px] border border-white bg-[#217346]" />
                      </div>
                    )}
                  </td>
                );
              })}
            </tr>
          ))}
        </tbody>
      </table>
    </div>
  );
}

function Arrow({ d }: { d: string }) {
  return (
    <svg width="12" height="12" viewBox="0 0 12 12" fill="#6a6a6a" aria-hidden="true">
      <path d={d} />
    </svg>
  );
}

function VerticalScroll() {
  return (
    <div className="flex w-[30px] flex-col pt-px pl-[2px]">
      <button type="button" aria-label="Scroll up" className="flex h-[25px] w-[25px] items-center justify-center border border-[#c6c6c6] bg-white">
        <Arrow d="M6 3l6 6H0z" />
      </button>
      <div className="flex w-[25px] flex-1 flex-col bg-[#dadada]">
        <div className="h-[95%] border border-[#ababab] bg-white" />
      </div>
      <button type="button" aria-label="Scroll down" className="flex h-[25px] w-[25px] items-center justify-center border border-[#c6c6c6] bg-white">
        <Arrow d="M0 3h12L6 9z" />
      </button>
    </div>
  );
}

function SheetTabs() {
  return (
    <div className="flex h-[33px] items-start">
      <div className="flex h-[31px] w-[118px] items-center gap-[23px] pl-[26px]">
        <button type="button" aria-label="Previous sheet">
          <svg width="12" height="12" viewBox="0 0 12 12" fill="#bdbdbd" aria-hidden="true"><path d="M9 0v12L3 6z" /></svg>
        </button>
        <button type="button" aria-label="Next sheet">
          <svg width="12" height="12" viewBox="0 0 12 12" fill="#bdbdbd" aria-hidden="true"><path d="M3 0v12l6-6z" /></svg>
        </button>
      </div>
      <button
        type="button"
        className="-mt-px h-[31px] w-[355px] border-x border-b-2 border-x-[#9b9b9b] border-b-[#217346] bg-white text-[19px] leading-7 font-bold text-[#217346]"
      >
        Ocean_Report_for_campaign_6ece0
      </button>
      <button type="button" aria-label="New sheet" className="ml-[38px] pt-1">
        <svg width="24" height="23" viewBox="0 0 24 23" fill="none" stroke="#7b7b7b" aria-hidden="true">
          <circle cx="12" cy="11.5" r="10.5" />
          <path d="M12 6v11M6.500 11.500h11" strokeWidth="2" />
        </svg>
      </button>
      <div className="ml-auto flex h-[31px] items-center pr-[29px]">
        <Dots />
        <div className="ml-[17px] flex h-[25px] w-[723px] bg-[#dadada]">
          <button type="button" aria-label="Scroll left" className="flex w-[25px] items-center justify-center border border-[#c6c6c6] bg-white">
            <Arrow d="M9 0v12L3 6z" />
          </button>
          <div className="flex-6 border border-[#ababab] bg-white" />
          <div className="flex-1" />
          <button type="button" aria-label="Scroll right" className="flex w-[25px] items-center justify-center border border-[#c6c6c6] bg-white">
            <Arrow d="M3 0v12l6-6z" />
          </button>
        </div>
      </div>
    </div>
  );
}

function StatusBar() {
  const [zoom, setZoom] = useState(100);
  return (
    <footer className="flex h-[35px] items-stretch border-t border-b-2 border-t-[#c6c6c6] border-b-[#b3afae] bg-[#f3f3f3] pr-2 pl-[7px] text-[15px] text-[#262626]">
      <span className="self-center">Select destination and press ENTER or choose Paste</span>
      <button type="button" aria-label="Normal view" aria-pressed="true" className="ml-auto flex w-[45px] items-center justify-center bg-[#c6c6c6]">
        <svg width="19" height="19" viewBox="0 0 19 19" fill="none" stroke="#6a6a6a" aria-hidden="true">
          <path d="M.5.500h18v18H.500zM6.500 0v19M12.500 0v19M0 6.500h19M0 12.500h19" />
        </svg>
      </button>
      <button type="button" aria-label="Page layout view" className="flex w-[45px] items-center justify-center">
        <svg width="19" height="19" viewBox="0 0 19 19" fill="none" stroke="#6a6a6a" aria-hidden="true">
          <path d="M.5.500h18v18H.500zM4.500 3.500h10v12h-10zM7 6.500h5M7 9.500h5M7 12.500h5" />
        </svg>
      </button>
      <button type="button" aria-label="Page break preview" className="flex w-[45px] items-center justify-center">
        <svg width="19" height="19" viewBox="0 0 19 19" fill="none" stroke="#6a6a6a" aria-hidden="true">
          <path d="M.5.500h18v18H.500zM.5 10.500h12V.500M6.500.500v10" />
        </svg>
      </button>
      <button type="button" aria-label="Zoom out" className="ml-[6px] flex w-[11px] items-center">
        <span className="h-[3px] w-[11px] bg-[#6a6a6a]" />
      </button>
      <input
        type="range"
        aria-label="Zoom"
        min={10}
        max={190}
        value={zoom}
        onChange={e => setZoom(Number(e.target.value))}
        className="mx-[6px] w-[148px] appearance-none bg-transparent [&::-webkit-slider-runnable-track]:h-[2px] [&::-webkit-slider-runnable-track]:bg-[#ababab] [&::-webkit-slider-thumb]:-mt-[7px] [&::-webkit-slider-thumb]:h-[17px] [&::-webkit-slider-thumb]:w-[8px] [&::-webkit-slider-thumb]:appearance-none [&::-webkit-slider-thumb]:bg-[#6a6a6a]"
      />
      <button type="button" aria-label="Zoom in" className="flex items-center">
        <svg width="12" height="12" viewBox="0 0 12 12" stroke="#6a6a6a" strokeWidth="2" aria-hidden="true">
          <path d="M6 0v12M0 6h12" />
        </svg>
      </button>
      <span className="w-[52px] self-center text-right">{zoom}%</span>
    </footer>
  );
}

/* ---------- taskbar ---------- */

function WidgetsIcon() {
  return (
    <svg width="38" height="48" viewBox="0 0 38 48" aria-hidden="true">
      <defs>
        <linearGradient id="widget" x1="0" y1="0" x2="1" y2="1">
          <stop offset="0" stopColor="#6cb8f5" />
          <stop offset="1" stopColor="#1fb0f0" />
        </linearGradient>
      </defs>
      <rect x="1" y="10" width="27" height="34" rx="3" fill="url(#widget)" />
      <rect x="4" y="28" width="6" height="12" rx="2" fill="#0a5fae" />
      <rect x="11.5" y="33" width="6" height="7" rx="2" fill="#0a5fae" />
      <rect x="19" y="22" width="6" height="18" rx="2" fill="#0a5fae" />
      <circle cx="25" cy="13" r="12" fill="#c42b1c" />
      <text x="25" y="19" fontSize="16" fill="#fff" textAnchor="middle">1</text>
    </svg>
  );
}

function WindowsIcon() {
  return (
    <svg width="36" height="36" viewBox="0 0 36 36" aria-hidden="true">
      <defs>
        <linearGradient id="win" x1="0" y1="0" x2="1" y2="1">
          <stop offset="0" stopColor="#53d0fb" />
          <stop offset="1" stopColor="#0273d4" />
        </linearGradient>
      </defs>
      <path d="M1 0h16v17H0V1zM18.500 0H35l1 1v16H18.500zM0 18.500h17V36H1l-1-1zM18.500 18.500H36V35l-1 1H18.500z" fill="url(#win)" />
    </svg>
  );
}

function SearchArt() {
  return (
    <svg width="70" height="38" viewBox="0 0 70 38" aria-hidden="true">
      <path d="M2 4q10 6 11 14-1 6-1 10Q3 26 2 17z" fill="#a8a8a8" />
      <path d="M3 7q5 14 11 25" stroke="#6a6a6a" fill="none" />
      <path d="M20 13Q22 2 32 4q6 1 10-3 7-1 7 4-1 9-9 14-6 7-14 9-5-7-6-15z" fill="#e9b872" />
      <path d="M24 9q4-6 11-4 4 5-1 12-5 3-10 1z" fill="#f6d59b" />
      <path d="M21 20q9-2 13-13l3 2q-4 13-15 14z" fill="#d3496a" />
      <path d="M20 16l7 2-1 9-6-3zM36 19q3 7 8 10l6 0-4 3-1 5-4-5q-6-4-8-11z" fill="#ea6a86" />
      <path d="M55 4l14 1-5 27-12-2z" fill="#b52c4e" />
      <path d="M55 4l3 0-4 27-3-2z" fill="#e9e0d2" />
      <path d="M60 10l4 0-2 12-3 0z" fill="#d66a84" />
    </svg>
  );
}

function TaskViewIcon() {
  return (
    <svg width="36" height="36" viewBox="0 0 36 36" aria-hidden="true">
      <rect x="0" y="10" width="27" height="25" rx="1" fill="#2b2b2b" />
      <rect x="9" y="1" width="27" height="24" rx="1" fill="#fff" fillOpacity=".92" />
      <path d="M9 10h18v15H9z" fill="#bdbdbd" />
    </svg>
  );
}

function ChatIcon() {
  return (
    <svg width="36" height="36" viewBox="0 0 36 36" aria-hidden="true">
      <defs>
        <linearGradient id="chat" x1="0" y1="1" x2="1" y2="0">
          <stop offset="0" stopColor="#4f52b8" />
          <stop offset=".6" stopColor="#6a62cf" />
          <stop offset="1" stopColor="#8b95ea" />
        </linearGradient>
      </defs>
      <path d="M18 1a17 17 0 1 1-7 33l-9 1q-2 0-1-2l2-6A17 17 0 0 1 18 1z" fill="url(#chat)" />
      <rect x="8" y="11" width="14" height="14" rx="2.5" fill="#fff" />
      <path d="M23.500 16l5-4v12l-5-4z" fill="#fff" />
    </svg>
  );
}

function FolderIcon() {
  return (
    <svg width="36" height="36" viewBox="0 0 36 36" aria-hidden="true">
      <path d="M0 4q0-2 2-2h9q2 0 3 2l2 2v6H0z" fill="#dd9d0c" />
      <path d="M0 9h10q2 0 4-3h20q2 0 2 2v24q0 2-2 2H2q-2 0-2-2z" fill="#fccb3c" />
      <path d="M6 34v-6q0-4 4-4h16q4 0 4 4v6z" fill="#0f78d4" />
      <path d="M11 29h14" stroke="#0b4f94" strokeWidth="1.8" />
    </svg>
  );
}

function EdgeIcon() {
  return (
    <svg width="36" height="36" viewBox="0 0 36 36" aria-hidden="true">
      <defs>
        <linearGradient id="edgeTop" x1="0" y1=".3" x2="1" y2=".6">
          <stop offset="0" stopColor="#0c86dd" />
          <stop offset=".45" stopColor="#30bfe0" />
          <stop offset="1" stopColor="#66dd5a" />
        </linearGradient>
        <linearGradient id="edgeLow" x1="0" y1="0" x2="0" y2="1">
          <stop offset="0" stopColor="#1595e3" />
          <stop offset="1" stopColor="#0a6ec7" />
        </linearGradient>
      </defs>
      <circle cx="18" cy="18" r="18" fill="url(#edgeTop)" />
      <path d="M0 17q2-8 11-8 11 0 12 9-4-2-7 1-4 6 2 11 7 5 15-1-5 7-15 7Q1 35 0 17z" fill="url(#edgeLow)" />
      <path d="M15 15q-4 5-1 11 5 9 19 2l0 1q-5 7-14 7-9-4-9-12 0-6 5-9z" fill="#11509c" />
      <path d="M15 20q1-6 6-5 4 2 1 7-1 5 8 5 3 0 6-2-1 4-4 4-8 2-13-1-5-3-4-8z" fill="#e6dad9" />
    </svg>
  );
}

function StoreIcon() {
  return (
    <svg width="36" height="36" viewBox="0 0 36 36" aria-hidden="true">
      <path d="M10 7V3q0-2 2-2h12q2 0 2 2v4" fill="none" stroke="#2ab5f2" strokeWidth="2.2" />
      <path d="M0 6h36v25q0 4-4 4H4q-4 0-4-4z" fill="#17508d" />
      <path d="M10.500 13H17v6.500h-6.500z" fill="#f25022" />
      <path d="M18.500 13H25v6.500h-6.500z" fill="#7fba00" />
      <path d="M10.500 21H17v6.500h-6.500z" fill="#00a4ef" />
      <path d="M18.500 21H25v6.500h-6.500z" fill="#ffb900" />
    </svg>
  );
}

function LensIcon() {
  return (
    <svg width="36" height="36" viewBox="0 0 36 36" aria-hidden="true">
      <path d="M0 0h36v36H0z" fill="#25abd9" />
      <path d="M12 6l-4 24h8l-2-4z" fill="#0d2f63" />
      <path d="M12 5h5v17h11v5H12z" fill="#fff" />
    </svg>
  );
}

function ArcIcon() {
  return (
    <svg width="36" height="36" viewBox="0 0 36 36" aria-hidden="true">
      <defs>
        <linearGradient id="arc" x1="0" y1="0" x2="1" y2="1">
          <stop offset="0" stopColor="#4cb8ee" />
          <stop offset=".6" stopColor="#3e5ce8" />
          <stop offset="1" stopColor="#8b2cf0" />
        </linearGradient>
      </defs>
      <path d="M14 1q4-2 8 0l10 6q3 2 3 5v12q0 3-3 5l-10 6q-4 2-8 0L4 29q-3-2-3-5V12q0-3 3-5z" fill="url(#arc)" />
      <path d="M5 26l9-16q2-3 4 0l8 16M12 25l4-6 3 5M25 14l6 11" fill="none" stroke="#fff" strokeWidth="2.6" strokeLinecap="round" />
    </svg>
  );
}

function ChromeIcon() {
  return (
    <svg width="36" height="36" viewBox="0 0 36 36" aria-hidden="true">
      <circle cx="18" cy="18" r="18" fill="#fcc419" />
      <path d="M2.400 9A18 18 0 0 1 33.600 9H18a9 9 0 0 0-7.800 13.500z" fill="#e33b2e" />
      <path d="M2.400 9l7.800 13.500A9 9 0 0 0 25.800 22.500L18 36A18 18 0 0 1 2.400 9z" fill="#229342" />
      <circle cx="18" cy="18" r="9" fill="#fff" />
      <circle cx="18" cy="18" r="7" fill="#1a73e8" />
    </svg>
  );
}

function SnipIcon() {
  return (
    <svg width="36" height="36" viewBox="0 0 36 36" aria-hidden="true">
      <rect width="27" height="27" rx="3" fill="#e3edf3" />
      <path d="M3 5h18M5 3v16" fill="none" stroke="#d83b01" strokeWidth="4" strokeDasharray="4 2.500" />
      <path d="M21 8v16M8 21h20" stroke="#8c959c" strokeWidth="4" fill="none" />
      <circle cx="32" cy="19" r="3.5" fill="none" stroke="#1c9be6" strokeWidth="2.6" />
      <circle cx="19" cy="32" r="3.5" fill="none" stroke="#1c9be6" strokeWidth="2.6" />
    </svg>
  );
}

function ExcelIcon() {
  return (
    <svg width="34" height="34" viewBox="0 0 34 34" aria-hidden="true">
      <rect x="17" y="4" width="15" height="25" fill="#fff" stroke="#217346" strokeWidth="1.5" />
      <path d="M20 8h4M26 8h4M20 12.500h4M26 12.500h4M20 17h4M26 17h4M20 21.500h4M26 21.500h4M20 26h4M26 26h4" stroke="#217346" strokeWidth="2.2" />
      <path d="M0 3l19-3v33L0 30z" fill="#1c7143" />
      <path d="M6 10.500l7 12M13 10.500l-7 12" stroke="#fff" strokeWidth="2.6" />
    </svg>
  );
}

const pinned: { name: string; icon: ReactNode; running?: boolean }[] = [
  { name: 'Task view', icon: <TaskViewIcon /> },
  { name: 'Chat', icon: <ChatIcon /> },
  { name: 'File Explorer', icon: <FolderIcon /> },
  { name: 'Edge', icon: <EdgeIcon /> },
  { name: 'Microsoft Store', icon: <StoreIcon /> },
  { name: 'Lens', icon: <LensIcon /> },
  { name: 'Arc', icon: <ArcIcon /> },
  { name: 'Chrome', icon: <ChromeIcon />, running: true },
  { name: 'Snipping Tool', icon: <SnipIcon />, running: true },
];

function Taskbar() {
  return (
    <nav aria-label="Taskbar" className="flex h-[70px] items-center bg-linear-to-r from-[#e1dad9] via-[#e8d8d6] to-[#e0dada] text-[#1f1f1f]">
      <button type="button" className="flex w-[400px] items-center gap-[6px] pb-[2px] pl-8 text-left text-[17px] leading-6">
        <WidgetsIcon />
        <span>
          <span className="block">Upcoming</span>
          <span className="block text-[#5c5858]">Earnings</span>
        </span>
      </button>
      <button type="button" aria-label="Start" className="mr-5"><WindowsIcon /></button>
      <label className="flex h-[47px] w-[328px] items-center rounded-full border border-b-2 border-[#cfc5c4] bg-[#f8f5f4] pr-2 pl-4">
        <span className="sr-only">Search</span>
        <svg width="24" height="24" viewBox="0 0 24 24" fill="none" stroke="#262626" strokeWidth="2.4" aria-hidden="true">
          <circle cx="10.5" cy="10.5" r="8.5" />
          <path d="M16.500 16.500l6 6" strokeLinecap="round" />
        </svg>
        <input placeholder="Search" className="ml-[14px] w-0 flex-1 bg-transparent text-[19px] outline-none placeholder:text-[#666]" />
        <SearchArt />
      </label>
      <div className="ml-1 flex">
        {pinned.map(app => (
          <button key={app.name} type="button" aria-label={app.name} className="relative flex h-[56px] w-[66px] items-center justify-center">
            {app.icon}
            {app.running && <span className="absolute bottom-0 h-[5px] w-[9px] rounded-full bg-[#7b7777]" />}
          </button>
        ))}
        <button type="button" aria-label="Excel" className="relative ml-[5px] flex h-[56px] w-[56px] items-center justify-center rounded-md bg-[#f0edec] shadow-xs">
          <ExcelIcon />
          <span className="absolute bottom-0 h-[5px] w-6 rounded-full bg-[#0078d7]" />
        </button>
      </div>
      <div className="ml-auto flex items-center pr-[30px]">
        <button type="button" aria-label="Show hidden icons" className="mr-[26px]">
          <svg width="18" height="10" viewBox="0 0 18 10" fill="none" stroke="#262626" strokeWidth="2" aria-hidden="true">
            <path d="M1 9l8-8 8 8" />
          </svg>
        </button>
        <button type="button" aria-label="Updates" className="mr-[27px]">
          <svg width="25" height="26" viewBox="0 0 25 26" fill="none" stroke="#262626" strokeWidth="1.4" aria-hidden="true">
            <path d="M1 13Q1 3 11 1q8 0 12 7M23 1v7h-7M11 24Q5 23 2 17M2 24v-7h6" />
            <circle cx="18" cy="19" r="6" fill="#fb9b04" stroke="none" />
          </svg>
        </button>
        <button type="button" className="mr-[27px] text-[17px] leading-[23px]">ENG<br />IN</button>
        <button type="button" aria-label="Network" className="mr-3">
          <svg width="25" height="19" viewBox="0 0 25 19" fill="none" stroke="#262626" strokeWidth="1.7" aria-hidden="true">
            <path d="M1 7Q12.500-5 24 7M4.500 10.500q8-8 16 0M8 13.500q4.500-4.500 9 0" />
            <circle cx="12.5" cy="16.5" r="1.8" fill="#262626" stroke="none" />
          </svg>
        </button>
        <button type="button" aria-label="Volume" className="mr-3">
          <svg width="25" height="20" viewBox="0 0 25 20" fill="none" stroke="#262626" strokeWidth="1.4" aria-hidden="true">
            <path d="M1 7h4l6-5v16l-6-5H1zM14 7q2.500 3 0 6M17 4q5 6 0 12M20 1q7.500 9 0 18" />
          </svg>
        </button>
        <button type="button" aria-label="Battery" className="mr-[25px]">
          <svg width="24" height="16" viewBox="0 0 24 16" aria-hidden="true">
            <rect x=".8" y=".8" width="19.5" height="14.4" rx="3" fill="none" stroke="#262626" strokeWidth="1.6" />
            <rect x="3" y="3" width="12.5" height="10" rx="1" fill="#262626" />
            <path d="M21 5q3 3 0 6z" fill="#262626" />
          </svg>
        </button>
        <button type="button" className="mr-[10px] pb-px text-right text-[18px] leading-6">17:09<br />17-10-2023</button>
        <button type="button" aria-label="4 notifications" className="size-[24px] rounded-full bg-[#0078d7] text-[14px] leading-6 text-white">4</button>
      </div>
    </nav>
  );
}

export default function App() {
  return (
    <div className="flex h-screen flex-col overflow-hidden bg-[#e6e6e6] font-['Noto_Sans','Open_Sans',sans-serif]">
      <div className="bg-[#217346]">
        <TitleBar />
        <TabStrip />
      </div>
      <Ribbon />
      <MessageBar />
      <FormulaBar />
      <main className="flex min-h-0 flex-1">
        <Sheet />
        <VerticalScroll />
      </main>
      <SheetTabs />
      <StatusBar />
      <Taskbar />
    </div>
  );
}
